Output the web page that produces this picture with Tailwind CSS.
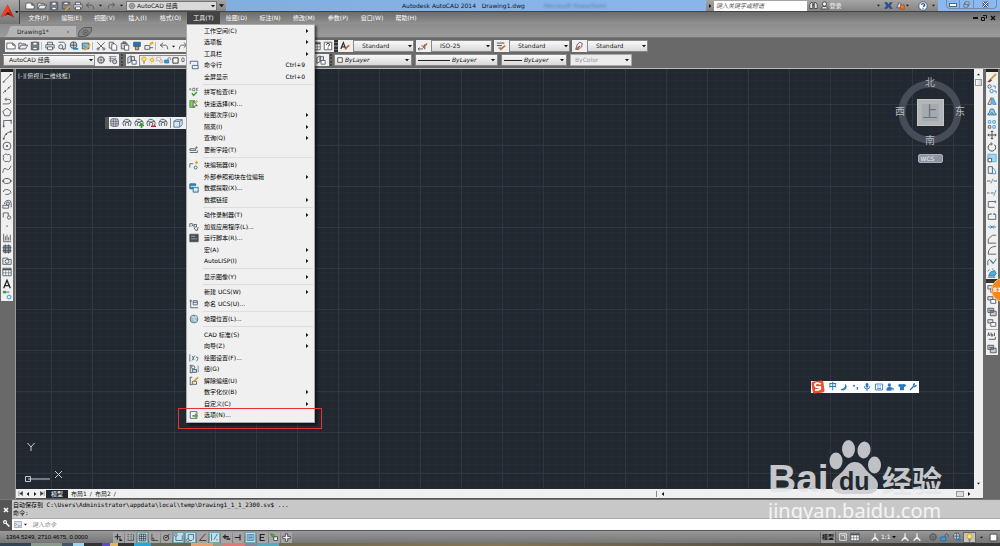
<!DOCTYPE html>
<html lang="zh-CN">
<head>
<meta charset="utf-8">
<title>Autodesk AutoCAD 2014 - Drawing1.dwg</title>
<script src="https://cdn.jsdelivr.net/npm/@tailwindcss/browser@4"></script>
</head>
<body class="h-screen overflow-hidden flex flex-col bg-[#696969] text-[6px] leading-[10px] text-[#222] font-['DejaVu_Sans','Noto_Sans_CJK_SC',sans-serif] [&_use]:fill-none [&_use]:stroke-[#4b525b] [&_use]:stroke-1">

<svg class="hidden" aria-hidden="true">
  <defs>
    <symbol id="new" viewBox="0 0 12 12"><path d="M1 2.500h7l3 2.500v4.500H1zM8 2.500V5h3" fill="#fff"/></symbol>
    <symbol id="open" viewBox="0 0 12 12"><path d="M1 9.500V2.500h3l1 1h4V5M1 9.500L3.500 5H11.500L9 9.500z" fill="#e8eaec"/></symbol>
    <symbol id="save" viewBox="0 0 12 12"><path d="M1.500 1.500h9v9h-9z" fill="#7d8792"/><path d="M3.500 1.500h5v3.500h-5zM3.500 7.500h5v3h-5z" fill="#fff"/></symbol>
    <symbol id="saveas" viewBox="0 0 12 12"><path d="M1.500 1.500h9v8h-9z" fill="#7d8792"/><path d="M3.500 1.500h5v3h-5z" fill="#fff"/><path d="M5 11L11 6" stroke="#e0a030" stroke-width="2"/></symbol>
    <symbol id="print" viewBox="0 0 12 12"><path d="M3 4.500V1.500h6v3M1 4.500h10v4H1z" fill="#e5e7ea"/><path d="M3 7h6v3.500H3z" fill="#fff"/></symbol>
    <symbol id="preview" viewBox="0 0 12 12"><path d="M2 1.500h6l2 2v6H6"/><circle cx="4.500" cy="7" r="2.500" fill="#dfe8ef"/><path d="M6.500 9l2 2"/></symbol>
    <symbol id="publish" viewBox="0 0 12 12"><circle cx="5.500" cy="5" r="4" fill="#b9cfdd"/><path d="M1.500 5h8M5.500 1v8"/><path d="M5 9.500h6" stroke="#1c82bf" stroke-width="2"/></symbol>
    <symbol id="globe3" viewBox="0 0 12 12"><path d="M1.500 2.500h8v7h-8z" fill="#7ec1dd"/><path d="M4 11L11 4" stroke="#e5aa2c" stroke-width="2"/><path d="M3 5l3 3" stroke="#2b6ea0"/></symbol>
    <symbol id="cut" viewBox="0 0 12 12"><path d="M1.500 1.500L9 9M10.500 1.500L3 9"/><circle cx="2.500" cy="9.500" r="1.300"/><circle cx="9.500" cy="9.500" r="1.300"/></symbol>
    <symbol id="copy" viewBox="0 0 12 12"><path d="M1.500 1.500h5v7h-5z"/><path d="M4.500 3.500h4l2 2v5.500h-6z" fill="#fff"/></symbol>
    <symbol id="paste" viewBox="0 0 12 12"><path d="M1.500 2.500h7v7h-7zM3.500 1h3v2h-3z" fill="#ccc"/><path d="M5.500 5h5v6h-5z" fill="#fff"/></symbol>
    <symbol id="match" viewBox="0 0 12 12"><path d="M2 1.500h8v5H2z" fill="#2e6fae" stroke="#285b88"/><path d="M4 6.500h4v4H4z" fill="#dba640"/></symbol>
    <symbol id="blocked" viewBox="0 0 12 12"><path d="M1 5.500h6V10H1zM7 8h4"/><path d="M7 4l4-2.500" stroke="#eea52c" stroke-width="2.500"/></symbol>
    <symbol id="undo" viewBox="0 0 12 12"><path d="M5 2L1.500 5 5 8M1.500 5H8q2.500.5 2.500 5" /></symbol>
    <symbol id="redo" viewBox="0 0 12 12"><path d="M7 2l3.500 3L7 8M10.500 5H4Q1.500 5.500 1.500 10"/></symbol>
    <symbol id="gear" viewBox="0 0 12 12"><circle cx="6" cy="6" r="4.300" stroke-dasharray="1.700 1"/><circle cx="6" cy="6" r="3.400"/><circle cx="6" cy="6" r="1.300"/></symbol>
    <symbol id="wsset" viewBox="0 0 12 12"><path d="M1 2h9M1 4.500h9M1 7h5M3 2v7" stroke="#6c737a"/><circle cx="8" cy="8" r="2.500" fill="#ccc"/></symbol>
    <symbol id="layers" viewBox="0 0 12 12"><path d="M1 3l4-2v7l-4 2zM5 2h4v5H5z" fill="#d7e5ee"/><path d="M6 6.500h5V11H6z" fill="#fff"/></symbol>
    <symbol id="bulb" viewBox="0 0 12 12"><circle cx="6" cy="4.500" r="3.300" fill="#fbe368" stroke="#c59a24"/><path d="M4.500 9h3M5 10.800h2"/></symbol>
    <symbol id="sun" viewBox="0 0 12 12"><circle cx="6" cy="6" r="2.500" fill="#fbe368" stroke="#c59a24"/><circle cx="6" cy="6" r="4.700" stroke="#d5a42d" stroke-dasharray="1.200 2.400"/></symbol>
    <symbol id="vpf" viewBox="0 0 12 12"><path d="M1 2h6v5H1z" stroke="#aaa"/><circle cx="8" cy="8" r="2.500" fill="#e8dfc0" stroke="#aaa"/></symbol>
    <symbol id="lock" viewBox="0 0 12 12"><path d="M1 6h6v4.500H1z" fill="#3aa0d8" stroke="#1a6ea0"/><path d="M6 6V3.500q2-3 4 0V6"/></symbol>
    <symbol id="swatch" viewBox="0 0 12 12"><path d="M1.500 1.500h9v9h-9z" fill="#fff" stroke="#222" stroke-width="1.500"/></symbol>
    <symbol id="help" viewBox="0 0 12 12"><path d="M1.500 1.500h9v9h-9z" fill="#fff"/><path d="M4 4.500q0-1.500 2-1.500t2 1.500Q8 5.500 6 6.500M6 8v1.300" stroke="#111"/></symbol>
    <symbol id="tstyle" viewBox="0 0 12 12"><path d="M1 9.500L4 2l3 7.500M2 7h4" stroke="#2a3038" stroke-width="1.400"/><path d="M6 10l5-5" stroke="#c46a2c" stroke-width="2"/></symbol>
    <symbol id="dstyle" viewBox="0 0 12 12"><path d="M0 9.500h6M2 8L0 9.500 2 11M4 6h3"/><path d="M6 8l5-5M8 10V4" stroke="#b5653a" stroke-width="1.700"/></symbol>
    <symbol id="tbstyle" viewBox="0 0 12 12"><path d="M1 2.500h9M1 5.500h6M3 8.500h3" stroke="#333"/><path d="M5 10.500l6-5" stroke="#b5763a" stroke-width="2"/></symbol>
    <symbol id="mlstyle" viewBox="0 0 12 12"><path d="M2 10l2-6 3-2.500 3 1.500-1 4-3 3z"/><path d="M3 10l4-4" stroke="#c05a2a" stroke-width="2"/></symbol>

    <symbol id="line" viewBox="0 0 12 12"><path d="M2 10.500L10.500 2"/><path d="M1 10.500h2M9.500 2h2" stroke-width="1.500"/></symbol>
    <symbol id="xline" viewBox="0 0 12 12"><path d="M1 11L11 2" stroke-dasharray="2.500 1"/><path d="M3 8.500h1.500M7.500 4.500H9" stroke-width="2"/></symbol>
    <symbol id="pline" viewBox="0 0 12 12"><path d="M1 9.500h6.500q3-.5 3-3t-3-2.500H4M5.500 2L3.500 4l2 2"/></symbol>
    <symbol id="polygon" viewBox="0 0 12 12"><path d="M6 1.500l5 3.700-2 5.300H3L1 5.200z"/></symbol>
    <symbol id="rect" viewBox="0 0 12 12"><path d="M2 10V3h9v4"/><path d="M1 10h2M10 3h1.500" stroke-width="2"/></symbol>
    <symbol id="arc" viewBox="0 0 12 12"><path d="M2 11Q3 3 11 2" /><path d="M1 10.500h2M4.500 5h1.500M9.500 2h2" stroke-width="2"/></symbol>
    <symbol id="circle" viewBox="0 0 12 12"><circle cx="6" cy="6" r="4.700"/><circle cx="6" cy="6" r=".8" fill="#2d6aa3"/></symbol>
    <symbol id="cloud" viewBox="0 0 12 12"><path d="M3 2q2-2 3.500 0Q9 .5 10 3q1.500 2 0 3.500 1.500 2-.5 3-1 2-3 .5-3 1.500-4-1Q.5 7.500 2 5.500 0 3 3 2z"/></symbol>
    <symbol id="spline" viewBox="0 0 12 12"><path d="M1 10.500Q2 3 5 6t6-4"/></symbol>
    <symbol id="ellipse" viewBox="0 0 12 12"><ellipse cx="6" cy="6" rx="4.800" ry="3"/><path d="M.5 6h2M9.500 6h2M6 2.500v1.200" stroke-width="2"/></symbol>
    <symbol id="ellarc" viewBox="0 0 12 12"><path d="M1.500 6Q2 2.500 6 3t5 3.500Q9.500 9.500 4 9"/></symbol>
    <symbol id="insert" viewBox="0 0 12 12"><path d="M1 7.500h7v3.500H1zM3 6q0-4 5-4.500 3 0 3 4V10"/><circle cx="7" cy="5.500" r="2" fill="#ccd"/></symbol>
    <symbol id="block" viewBox="0 0 12 12"><path d="M1.500 9V3.500h6V7"/><circle cx="8.500" cy="9" r="2"/></symbol>
    <symbol id="dot" viewBox="0 0 12 12"><path d="M5.300 6h1.500" stroke-width="1.500"/></symbol>
    <symbol id="hatch" viewBox="0 0 12 12"><path d="M2 1v9.500h9M4 9V4M6 9V2M8 9V5M10 9V2"/></symbol>
    <symbol id="grad" viewBox="0 0 12 12"><path d="M2 2h8v8H2z" fill="#9aa0a7"/><path d="M.5 4.500h11M.5 8h11M4 .5v11M8 .5v11"/></symbol>
    <symbol id="region" viewBox="0 0 12 12"><path d="M1 2.500h6v1.500h4v6H1z"/><circle cx="6" cy="6.500" r="2.300"/></symbol>
    <symbol id="table" viewBox="0 0 12 12"><path d="M1 1.500h10v9H1z" fill="#fff"/><path d="M1 3h10" stroke-width="2"/><path d="M1 7h10M4.500 4v6.500M8 4v6.500" stroke-width=".7"/></symbol>
    <symbol id="mtext" viewBox="0 0 12 12"><path d="M2 11L6 1.500 10 11M3.500 8h5" stroke="#222" stroke-width="1.600"/></symbol>
    <symbol id="addsel" viewBox="0 0 12 12"><path d="M1 2.500h4" stroke="#3aa535" stroke-width="3"/><path d="M5 2.500h4"/><circle cx="8.500" cy="8.500" r="2.300" fill="#d5ecfa" stroke="#2287c8"/></symbol>

    <symbol id="erase" viewBox="0 0 12 12"><path d="M4 8L11 1" stroke="#d99838" stroke-width="2.200"/><path d="M1 10.500l3-3 1.500 1.500-2 1.500z" fill="#b8332a" stroke="#333" stroke-width=".7"/></symbol>
    <symbol id="mcopy" viewBox="0 0 12 12"><circle cx="3" cy="3" r="2"/><circle cx="5.500" cy="8.500" r="2" stroke="#2287c8"/><path d="M7 2.500h3v3M8 8.500h3v2.500" stroke="#2287c8"/></symbol>
    <symbol id="mirror" viewBox="0 0 12 12"><path d="M1 10L5 2v8z"/><path d="M7 2l4 8H7z" fill="#7fc4ec" stroke="#2287c8"/></symbol>
    <symbol id="offset" viewBox="0 0 12 12"><path d="M1 9.500q0-2.500 2-3 0-4.500 3-4.500t3 4.500q2 .5 2 3z" fill="#9bd0ef" stroke="#24618f"/><path d="M4 8.500Q5 5 8 8.500"/></symbol>
    <symbol id="array" viewBox="0 0 12 12"><path d="M1.500 8h3v3h-3z"/><path d="M1.500 2h3v3h-3zM7 2h3v3H7zM7 8h3v3H7z" stroke="#2f9ad8"/></symbol>
    <symbol id="move" viewBox="0 0 12 12"><path d="M6 1v10M1 6h10" stroke="#333"/><path d="M4.500 2.500L6 1l1.500 1.500M4.500 9.500L6 11l1.500-1.500M2.500 4.500L1 6l1.500 1.500M9.500 4.500L11 6 9.500 7.500" stroke="#333"/></symbol>
    <symbol id="rotate" viewBox="0 0 12 12"><path d="M5 2a4.500 4.500 0 1 0 4 1.200M4.500.5L6.500 2.300 4.500 4" stroke="#333"/></symbol>
    <symbol id="scale" viewBox="0 0 12 12"><path d="M1 1.500h10v9H1z" fill="#9fd6f2" stroke="#57aeda"/><path d="M1.500 6.500h4v4h-4z" fill="#fff"/></symbol>
    <symbol id="stretch" viewBox="0 0 12 12"><path d="M1.500 2h5v8h-5z"/><path d="M6 3q4 1 4.500 7.500H5" stroke="#2f8fc8"/></symbol>
    <symbol id="trim" viewBox="0 0 12 12"><path d="M0 6h4M8 6h4"/><path d="M4.500 9L7.500 3" stroke="#2f8fc8"/></symbol>
    <symbol id="extend" viewBox="0 0 12 12"><path d="M0 6h3M4.500 6H8"/><path d="M8 9.500l3-7" stroke="#2f8fc8"/></symbol>
    <symbol id="breakp" viewBox="0 0 12 12"><path d="M1.500 10V3H10v2M1.500 10H9"/><path d="M9 3h2" stroke="#2f8fc8" stroke-width="2"/></symbol>
    <symbol id="break" viewBox="0 0 12 12"><path d="M1.500 10V4h2.500M8 4h2.500v6H1.500"/><path d="M3.500 3.500h2M7.500 3.500h2" stroke="#2f8fc8" stroke-width="1.800"/></symbol>
    <symbol id="join" viewBox="0 0 12 12"><path d="M1 6h10M4 4l2 2-2 2M8.500 4l-2 2 2 2" stroke="#2f78a8"/></symbol>
    <symbol id="chamfer" viewBox="0 0 12 12"><path d="M1.500 11V6L6.500 1.500H11M1.500 11H11"/></symbol>
    <symbol id="fillet" viewBox="0 0 12 12"><path d="M1.500 11Q1 2 11 1.500M1.500 11H11"/></symbol>
    <symbol id="blend" viewBox="0 0 12 12"><path d="M1 10V5q2-4 4 0t4 1l2-4"/><path d="M4 4l4 4" stroke="#2f8fc8" stroke-width="1.600"/></symbol>
    <symbol id="explode" viewBox="0 0 12 12"><path d="M2 9.500L4 5l5-2 2 3.500-2 3z" fill="#4fb0e0" stroke="#2479a8"/><path d="M1 4l2-2M7 2V.5M1 11h9"/></symbol>
    <symbol id="order" viewBox="0 0 12 12"><path d="M1 2h6v4H1z" fill="#d9dde2"/><path d="M4.500 5.500h6v4.500h-6z" fill="#fff"/></symbol>
    <symbol id="order2" viewBox="0 0 12 12"><path d="M1 1.500h7v5H1zM4 5h7v5.500H4z" fill="#c7cbd0"/><path d="M2.500 4h5" /></symbol>
    <symbol id="abc" viewBox="0 0 12 12"><path d="M1 6l1-4 1 4M5 2v4h2V4H5M9 6V2M2 10h8V7" stroke="#444"/></symbol>

    <symbol id="cmdrow" viewBox="0 0 12 12"><path d="M1.500 5V1.500h9V6M4 6.500h7v4H4z" stroke="#3c5a78"/></symbol>
    <symbol id="spell" viewBox="0 0 12 12"><path d="M.5 4l1-2.500 1 2.500M4.500 1.500v3H7v-3zM11 1.500H9V4h2" stroke-width=".8"/><path d="M3.500 7.500l2 2.500 4-4" stroke="#3a9e38" stroke-width="1.700"/></symbol>
    <symbol id="qsel" viewBox="0 0 12 12"><path d="M1 2h6v8H1z" fill="#8bcc70" stroke="#3d8f34"/><path d="M5 3l5 5H7l-2 2z" fill="#fff"/><path d="M9 1v4M7.500 3h3.500" stroke="#e6a52b"/></symbol>
    <symbol id="field" viewBox="0 0 12 12"><path d="M1 4.500h7v2H1zM1 9h9V6.500"/><path d="M9 1.500v3M7.500 3h3" stroke="#3a9e38"/></symbol>
    <symbol id="bedit" viewBox="0 0 12 12"><path d="M1 9V4.500h4"/><circle cx="8" cy="9" r="1.800"/><path d="M9 1v4M7 3h4" stroke="#e6a52b" stroke-width="1.500"/></symbol>
    <symbol id="dext" viewBox="0 0 12 12"><path d="M1 1h7v6H1z" fill="#3287bd" stroke="#235f8c"/><path d="M5 5h6v6H5z" fill="#bfe0f2" stroke="#235f8c"/><path d="M2 4h8M6 8h4" stroke="#fff"/></symbol>
    <symbol id="appload" viewBox="0 0 12 12"><path d="M1 6V2h3l1 2-2 1M6 3h3v3H6zM6 7l2 3h2l1-4"/></symbol>
    <symbol id="script" viewBox="0 0 12 12"><path d="M1 1.500h10v9H1z" fill="#4a4d52"/><path d="M2.500 4h5M2.500 7h7" stroke="#aaa"/></symbol>
    <symbol id="ucs" viewBox="0 0 12 12"><path d="M2 1v9.500h9M1 3l1-2 1 2M5 2h5v5H5zM5 4h5" stroke="#435a73"/></symbol>
    <symbol id="geo" viewBox="0 0 12 12"><circle cx="6" cy="6" r="4.700" fill="#9cc0c9" stroke="#55747c"/><path d="M3 3l3 1v3l3 2M8 2v2h2" stroke="#eef"/></symbol>
    <symbol id="dset" viewBox="0 0 12 12"><path d="M1 1.500v9M3.500 9L7 3M4 3.500l2 5M8 6q2-3 3 0L9 10" stroke="#476680"/></symbol>
    <symbol id="grp" viewBox="0 0 12 12"><path d="M1 1.500h3M1 10.500h3M1.500 1.500v9"/><circle cx="5" cy="4" r="2"/><path d="M4 6.500h5v3.500H4z" fill="#b9d9ec"/><path d="M11 2v8" stroke="#3690c8"/></symbol>
    <symbol id="ungrp" viewBox="0 0 12 12"><path d="M1 1.500h3M1 10.500h3M1.500 1.500v9M4 6.500h5V10H4z"/><path d="M5 7l6-5.500" stroke="#d19a2b" stroke-width="2"/></symbol>
    <symbol id="opt" viewBox="0 0 12 12"><path d="M1.500 2h8v8h-8z" fill="#fff"/><path d="M4 6h3V3.500L11 7l-4 3V8H4z" fill="#4cab3c" stroke="none"/></symbol>

    <symbol id="g1" viewBox="0 0 12 12"><rect x="1" y="1" width="9" height="9" rx="2" fill="#d3dbe8"/><path d="M1 4h9M1 7h9M4 1v9M7 1v9" stroke-width=".8"/></symbol>
    <symbol id="g2" viewBox="0 0 12 12"><path d="M2 9.500Q0 6 2 3.500T6 1.500t4 2 0 6M4 9.500V6q2-2 4 0v3.500M2 4q4 2 8 0" fill="#e5e8ee"/></symbol>
    <symbol id="plus" viewBox="0 0 12 12"><path d="M9 6v6M6 9h6" stroke="#2ba02b" stroke-width="1.800"/></symbol>
    <symbol id="minus" viewBox="0 0 12 12"><path d="M6 10h6" stroke="#d02626" stroke-width="1.800"/></symbol>
    <symbol id="cube" viewBox="0 0 12 12"><path d="M1 4l3-2h7v6l-3 3H1zM1 4h7v7M8 4l3-2" fill="#d5e6f5" stroke="#4c6e93"/></symbol>

    <symbol id="s1" viewBox="0 0 12 12"><path d="M1 5h8M4.500 1v8M7 8l4 2M8 7v4" stroke="#222" stroke-width="1.400"/></symbol>
    <symbol id="s2" viewBox="0 0 12 12"><path d="M2 2h2M6 2h2M2 5h2M6 5h2M2 8h2M6 8h2M10 2v8H2"/></symbol>
    <symbol id="s3" viewBox="0 0 12 12"><path d="M1.500 1.500h9v9h-9zM4.500 1.500v9M7.500 1.500v9M1.500 4.500h9M1.500 7.500h9" stroke="#333"/></symbol>
    <symbol id="s4" viewBox="0 0 12 12"><path d="M2.500 1v9H11M2.500 7H5v3" stroke="#333"/></symbol>
    <symbol id="s5" viewBox="0 0 12 12"><circle cx="5.500" cy="6.500" r="3.500" stroke="#222"/><path d="M5 7l5-6M4 6h3" stroke="#222"/></symbol>
    <symbol id="s6" viewBox="0 0 12 12"><path d="M2.500 2.500V10H11V3" stroke="#315a78"/><path d="M1 1h3v3H1z" fill="#fff"/></symbol>
    <symbol id="s7" viewBox="0 0 12 12"><path d="M3 2h7v6L8 10H3z" stroke="#315a78"/><path d="M1 8h3v3H1z" fill="#fff"/></symbol>
    <symbol id="s8" viewBox="0 0 12 12"><path d="M10 1L2 10h9" stroke="#222"/></symbol>
    <symbol id="s9" viewBox="0 0 12 12"><path d="M2 1v9.500M5 9l5-8" stroke="#26638c"/><path d="M8 9h2" stroke="#d9a020" stroke-width="2"/></symbol>
    <symbol id="s10" viewBox="0 0 12 12"><path d="M1 5h8M4 2v6M6 8h5" stroke="#222" stroke-width="1.700"/></symbol>
    <symbol id="s11" viewBox="0 0 12 12"><path d="M1 6h7M8 2v8" stroke="#222" stroke-width="1.500"/></symbol>
    <symbol id="s12" viewBox="0 0 12 12"><path d="M1.500 2h9v8h-9z" fill="#a8cfe6" stroke="#3a7da8"/><path d="M3 4h6M3 6h6M3 8h6" stroke="#3a7da8"/></symbol>
    <symbol id="s13" viewBox="0 0 12 12"><path d="M9 2H3v8h6M3 6h5" stroke="#222" stroke-width="1.600"/></symbol>
    <symbol id="s14" viewBox="0 0 12 12"><path d="M1 1l4 1 1 4-3-1z" fill="#5ab24a" stroke="#2f7d28"/><path d="M5 5h5v5H5z" fill="#eee" stroke="#333"/></symbol>
    <symbol id="s15" viewBox="0 0 12 12"><path d="M4.500 1h3v3.500H11v3H7.500V11h-3V7.500H1v-3h3.500z" fill="#eee" stroke="#333"/></symbol>
    <symbol id="binoc" viewBox="0 0 12 12"><path d="M1 10V5l2-3h2v8zM7 10V2h2l2 3v5zM5 5h2" fill="#e2e2e2" stroke="#333"/></symbol>
    <symbol id="user" viewBox="0 0 12 12"><circle cx="6" cy="4" r="2.800" fill="#f3f3f3" stroke="#333"/><path d="M1 10.500q1-3 3.500-3h3q2.500 0 3.500 3z" fill="#f3f3f3" stroke="#333"/></symbol>
    <symbol id="exch" viewBox="0 0 12 12"><path d="M1 2h3l2 3 2-3h3L8 6l3 4H8L6 7.500 4 10H1l2.500-4z" fill="#2d4f9c" stroke="#1e3572" stroke-width=".6"/></symbol>
    <symbol id="stay" viewBox="0 0 12 12"><path d="M1 9l3-7 3 3v4z" fill="#dde" stroke="#446"/><path d="M6 5h5v6H6z" fill="#e8772a" stroke="#a44c12"/></symbol>
    <symbol id="qhelp" viewBox="0 0 12 12"><circle cx="6" cy="6" r="5" fill="#fff" stroke="#33557f"/><path d="M4 4.500Q4.500 3 6 3t2 1.500-2 2M6 8v1.300" stroke="#1f4f9e" stroke-width="1.500"/></symbol>
    <symbol id="annot" viewBox="0 0 12 12"><path d="M6 1.500V6L2 10.500M6 6l4 4.500M4 8h4" stroke="#eee" stroke-width="1.500"/></symbol>
    <symbol id="model" viewBox="0 0 12 12"><path d="M2 2h8v8H2zM4 4h4v4" stroke="#eee"/></symbol>
    <symbol id="clean" viewBox="0 0 12 12"><path d="M1.500 1.500h9v9h-9z" fill="#fff" stroke="#333"/></symbol>
    <symbol id="arrow" viewBox="0 0 12 12"><path d="M0 3h12L6 10z" fill="#111" stroke="none"/></symbol>
    <symbol id="right" viewBox="0 0 12 12"><path d="M3 0v12l7-6z" fill="#111" stroke="none"/></symbol>
    <symbol id="moon" viewBox="0 0 12 12"><path d="M8 1Q13 7 6 11 2 12 1 9q7 0 7-8z" fill="#2a78bd" stroke="none"/></symbol>
    <symbol id="comma" viewBox="0 0 12 12"><circle cx="3" cy="4" r="1.500" fill="#2a78bd" stroke="none"/><path d="M8 6v4" stroke="#2a78bd" stroke-width="2"/></symbol>
    <symbol id="mic" viewBox="0 0 12 12"><rect x="4" y="0" width="4" height="7" rx="2" fill="#2a78bd" stroke="none"/><path d="M2 5q0 4 4 4t4-4M6 9v3" stroke="#2a78bd" stroke-width="1.500"/></symbol>
    <symbol id="kbd" viewBox="0 0 12 12"><path d="M.8 1.500h10.500v9H.8zM3 4h1M5.500 4h1M8 4h1M3 6h1M5.500 6h1M8 6h1M3 8.500h6" stroke="#2a78bd" stroke-width="1.300"/></symbol>
    <symbol id="person" viewBox="0 0 12 12"><circle cx="5" cy="3" r="2.500" fill="#2a78bd" stroke="none"/><path d="M1 11q0-5 4-5t3 2v3zM8 8h3v3" fill="#2a78bd" stroke="#2a78bd"/></symbol>
    <symbol id="shirt" viewBox="0 0 12 12"><path d="M0 3l3-2q3 2 6 0l3 2-1.500 3L9 5.500V11H3V5.500L1.500 6z" fill="#2a78bd" stroke="none"/></symbol>
    <symbol id="wrench" viewBox="0 0 12 12"><path d="M1.500 10.500L7 5M7 5q-1-3 2-4M7 5q3 1 4-2" stroke="#2a78bd" stroke-width="2"/></symbol>
  </defs>
</svg>

<header class="flex shrink-0 h-6 bg-[#777]">
  <button aria-label="应用程序菜单" class="w-5 shrink-0 flex items-center bg-linear-to-b from-[#aaa] to-[#777] border-r border-[#444]">
    <svg class="w-4 h-5" viewBox="0 0 16 20"><path d="M8 2L1 15l4-1 3-2 3 2 4 2z" fill="#c92017"/><path d="M8 2l2 7-5 5-4 1z" fill="#e8402c"/><path d="M5 14l3-4 4 4-4-1.500z" fill="#6d0b08"/></svg>
    <svg class="size-1"><use href="#arrow"/></svg>
  </button>
  <div class="flex-1 flex flex-col min-w-0">
    <div class="h-3 flex bg-linear-to-r from-[#7fa9d8] via-[#86b4e8] to-[#8cbaf0] border-b border-[#444]">
      <div class="flex items-center bg-linear-to-b from-[#a5a5a5] to-[#858585] pl-1 w-[206px]">
        <div data-strip="new:新建,open:打开,save:保存,saveas:另存为,print:打印,undo:放弃" class="flex"></div>
        <svg class="size-[3px] mx-[3px]"><use href="#arrow"/></svg>
        <button aria-label="重做" class="w-3 flex justify-center"><svg class="size-[9px]"><use href="#redo"/></svg></button>
        <svg class="size-[3px] mx-[3px]"><use href="#arrow"/></svg>
        <label class="flex-1 flex items-center h-[10px] bg-[#d9d9d9] border border-[#777] px-px" aria-label="工作空间">
          <svg class="size-2"><use href="#gear"/></svg>
          <select class="appearance-none flex-1 pl-px outline-none" aria-label="工作空间"><option>AutoCAD 经典</option></select>
          <svg class="size-1"><use href="#arrow"/></svg>
        </label>
        <svg class="size-[5px] mx-[2px]"><use href="#arrow"/></svg>
      </div>
      <h1 class="flex-1 pl-[176px] text-[#10151c] leading-[12px] whitespace-pre">Autodesk AutoCAD 2014   Drawing1.dwg<span class="text-[#5d80ab] blur-[1px]">          Microsoft PowerPoint</span></h1>
      <div class="flex items-center w-[232px] bg-linear-to-b from-[#a5a5a5] to-[#858585]">
        <svg class="size-1 mx-[2px]"><use href="#right"/></svg>
        <input aria-label="搜索" placeholder="键入关键字或短语" class="w-[93px] h-[10px] bg-white px-[2px] italic placeholder:text-[#555] outline-none">
        <button aria-label="搜索" class="w-[13px] flex justify-center"><svg class="size-[9px]"><use href="#binoc"/></svg></button>
        <button class="flex items-center text-[#eee] w-[58px] gap-px"><svg class="size-[9px]"><use href="#user"/></svg><span>登录</span></button>
        <svg class="size-[3px]"><use href="#arrow"/></svg>
        <button aria-label="Exchange" class="ml-[2px] w-3 flex justify-center"><svg class="size-[9px]"><use href="#exch"/></svg></button>
        <button aria-label="保持连接" class="w-3 flex justify-center"><svg class="size-[9px]"><use href="#stay"/></svg></button>
        <svg class="size-[3px] mr-2"><use href="#arrow"/></svg>
        <button aria-label="帮助" class="w-3 flex justify-center"><svg class="size-[10px]"><use href="#qhelp"/></svg></button>
        <svg class="size-[3px] mx-[3px]"><use href="#arrow"/></svg>
      </div>
      <div class="flex w-[62px] pl-2">
        <button aria-label="最小化" class="w-[14px] h-[9px] border border-t-0 border-[#6d8db5] rounded-bl flex items-end justify-center pb-[2px]"><i class="w-[6px] h-[2px] bg-white outline outline-[#567]"></i></button>
        <button aria-label="还原" class="w-[13px] h-[9px] border-b border-[#6d8db5] flex items-center justify-center"><svg class="size-[7px]" viewBox="0 0 7 7"><path d="M2 1h4v3H2zM1 3h4v3H1z" fill="#fff" stroke="#567"/></svg></button>
        <button aria-label="关闭" class="w-6 h-[9px] border border-t-0 border-[#6d8db5] rounded-br flex items-center justify-center"><svg class="size-[7px]" viewBox="0 0 7 7"><path d="M1 1l5 5M6 1L1 6" stroke="#456" stroke-width="2.500"/><path d="M1 1l5 5M6 1L1 6" stroke="#fff"/></svg></button>
      </div>
    </div>
    <div class="h-3 flex items-stretch bg-linear-to-b from-[#6b6b6b] to-[#929292]">
      <nav class="flex pl-[2px] text-white leading-[12px]" aria-label="菜单栏" id="menubar"></nav>
      <div class="ml-auto mr-1 flex items-center gap-[3px]">
        <button aria-label="最小化图形" class="w-[5px] h-[2px] bg-[#111]"></button>
        <button aria-label="还原图形"><svg class="size-[6px]" viewBox="0 0 6 6"><path d="M2 .5h3.500v3M.5 2.500h3v3h-3z" fill="none" stroke="#111"/></svg></button>
        <button aria-label="关闭图形"><svg class="size-[6px]" viewBox="0 0 6 6"><path d="M1 1l4 4M5 1L1 5" stroke="#111" stroke-width="1.500"/></svg></button>
      </div>
    </div>
  </div>
</header>

<div class="shrink-0 h-[14px] bg-linear-to-b from-[#8c8c8c] to-[#9b9b9b] flex items-end pl-1 border-b border-[#777]">
  <svg class="w-2 h-3" viewBox="0 0 8 12"><path d="M0 12Q4 11 5 4 6 1 8 1v11z" fill="#b4b4b4"/></svg>
  <button class="h-[11px] w-16 flex items-center justify-between bg-[#b4b4b4] pl-[5px] pr-[6px]"><span>Drawing1*</span><svg class="size-1" viewBox="0 0 6 6"><path d="M1 1l4 4M5 1L1 5" stroke="#777"/></svg></button>
  <button aria-label="新建选项卡" class="h-[10px] w-[14px] ml-[2px] rounded-tl-lg rounded-br-lg border border-[#5c5c5c] bg-[#858585] flex items-center justify-center"><svg class="size-[7px]" viewBox="0 0 12 12"><circle cx="6" cy="6" r="4.500" fill="none" stroke="#444"/><path d="M6 4v4M4 6h4" stroke="#444"/></svg></button>
</div>

<section class="shrink-0 h-[31px] pt-[2px] flex flex-col gap-[2px] border-b border-[#bbb]" aria-label="工具栏">
  <div class="flex h-3 pl-[5px]">
    <div class="w-[329px] flex items-center bg-[#f0f0f0] overflow-hidden">
      <div class="flex" data-strip="new:新建,open:打开,save:保存"></div><i class="w-[3px] h-2 border-l border-[#bbb]"></i>
      <div class="flex" data-strip="print:打印,preview:打印预览,publish:发布,globe3:三维打印"></div><i class="w-[3px] h-2 border-l border-[#bbb]"></i>
      <div class="flex" data-strip="cut:剪切,copy:复制,paste:粘贴,match:特性匹配,blocked:块编辑器"></div><i class="w-[3px] h-2 border-l border-[#bbb]"></i>
      <div class="flex" data-strip="undo:放弃"></div><svg class="size-[3px] mx-[2px]"><use href="#arrow"/></svg><div class="flex" data-strip="redo:重做"></div>
      <div class="ml-auto flex" data-strip="table:计算器,help:帮助"></div>
    </div>
    <i class="w-1 border-x-2 border-dotted border-[#333]"></i>
    <div class="flex gap-[2px]" id="styles"></div>
  </div>
  <div class="flex h-3 pl-[3px]">
    <div class="w-[116px] flex items-center bg-[#f0f0f0]">
      <label class="w-[93px] h-[11px] flex items-center bg-linear-to-b from-[#fafafa] to-[#ddd] border border-[#888] pl-[5px] pr-px"><select aria-label="工作空间" class="appearance-none flex-1 outline-none"><option>AutoCAD 经典</option></select><svg class="size-1"><use href="#arrow"/></svg></label>
      <div class="flex" data-strip="gear:工作空间设置,wsset:我的工作空间"></div>
    </div>
    <i class="w-[3px] mx-[2px] border-l-2 border-dotted border-[#444]"></i>
    <div class="w-[203px] flex items-center bg-[#f0f0f0]">
      <div class="flex" data-strip="layers:图层特性"></div>
      <label class="w-[176px] ml-px h-[11px] flex items-center bg-[#eee] border border-[#888]">
        <svg class="size-2"><use href="#bulb"/></svg><svg class="size-2"><use href="#sun"/></svg><svg class="size-2"><use href="#vpf"/></svg><svg class="size-2"><use href="#lock"/></svg><svg class="size-[7px]"><use href="#swatch"/></svg>
        <select aria-label="图层" class="appearance-none flex-1 pl-[2px] outline-none"><option>0</option></select>
      </label>
      <div class="flex" data-strip="layers:图层状态"></div>
    </div>
    <i class="w-[3px] mx-px border-l-2 border-dotted border-[#444]"></i>
    <div class="flex gap-[3px] italic text-[#111]" id="props"></div>
  </div>
</section>

<main class="flex-1 min-h-0 flex">
  <aside class="w-4 shrink-0 bg-[#696969] border-r border-[#999]" aria-label="绘图">
    <div class="w-3 ml-px h-[3px] bg-[#222]"></div>
    <div class="w-3 ml-px h-[229px] bg-[#f0f0f0] flex flex-col justify-around items-center" data-col="line:直线,xline:构造线,pline:多段线,polygon:多边形,rect:矩形,arc:圆弧,circle:圆,cloud:修订云线,spline:样条曲线,ellipse:椭圆,ellarc:椭圆弧,insert:插入块,block:创建块,dot:点,hatch:图案填充,grad:渐变色,region:面域,table:表格,mtext:多行文字,addsel:添加选定对象"></div>
  </aside>

  <div class="flex-1 min-w-0 flex flex-col">
    <div class="flex-1 min-h-0 flex">
      <div class="relative flex-1 bg-[#212830] bg-[linear-gradient(to_right,#2f3740_1px,transparent_1px),linear-gradient(to_bottom,#2f3740_1px,transparent_1px),linear-gradient(to_right,#242b34_1px,transparent_1px),linear-gradient(to_bottom,#242b34_1px,transparent_1px)] bg-size-[41px_41px,41px_41px,8px_8px,8px_8px] bg-position-[35px_35px]">
        <p class="pl-[2px] pt-[2px] text-[#ddd]">[-][俯视][二维线框]</p>

        <div class="absolute left-[89px] top-12 h-3 w-[100px] bg-[#f0f0f0] flex items-center border-l-4 border-[#555]" aria-label="平滑网格">
          <button aria-label="平滑对象" class="w-3 flex justify-center"><svg class="size-[10px]"><use href="#g1"/></svg></button>
          <button aria-label="提高平滑度" class="w-3 flex justify-center"><svg class="size-[10px]"><use href="#g2"/></svg></button>
          <button aria-label="优化网格" class="w-3 flex justify-center"><svg class="size-[10px]"><use href="#g2"/><use href="#plus"/></svg></button>
          <button aria-label="降低平滑度" class="w-3 flex justify-center"><svg class="size-[10px]"><use href="#g2"/><use href="#minus"/></svg></button>
          <button aria-label="锐化" class="w-3 flex justify-center"><svg class="size-[10px]"><use href="#g2"/></svg></button>
          <i class="w-px h-[10px] bg-[#888] mx-px"></i>
          <button aria-label="网格长方体" class="w-3 flex justify-center"><svg class="size-[10px]"><use href="#cube"/></svg></button>
        </div>

        <div class="absolute right-[9px] top-[8px] w-[70px] text-[#b5b9bd] text-[10px] leading-[12px]">
          <svg class="absolute left-[3px] top-[3px] size-16" viewBox="0 0 64 64"><circle cx="32" cy="32" r="28" fill="none" stroke="#464d58" stroke-width="7"/></svg>
          <div class="relative flex flex-col items-center">
            <span>北</span>
            <div class="w-full flex items-center justify-between h-[46px]"><span>西</span><button class="size-[27px] p-1 bg-[#b3b5b6] border border-[#c4c4c4] text-[#69737c] text-[15px] leading-[17px]"><span class="block bg-[#a3abb1]">上</span></button><span>东</span></div>
            <span>南</span>
            <button class="mt-[7px] w-[25px] h-[9px] rounded-[2px] bg-[#8f94a3] border border-[#a9adb8] text-[6px] leading-[7px] text-[#eee] text-left pl-[2px]">WCS</button>
          </div>
        </div>

        <svg class="absolute left-2 bottom-1 w-10 h-11" viewBox="0 0 40 44" fill="none" stroke="#ccc"><path d="M3.500 2l3.500 4 3.500-4M7 6v4M31 30l7 7M38 30l-7 7M1.500 35.500h5v5h-5zM4 38h22"/></svg>

        <div class="absolute right-[55px] top-[312px] h-3 w-[108px] flex items-center justify-between bg-white pr-[2px]" aria-label="输入法">
          <svg class="size-[14px] shrink-0" viewBox="0 0 14 14"><rect x="1" y="1" width="12" height="12" rx="2" fill="#e8502e" transform="rotate(-8 7 7)"/><path d="M10 4Q4 2 4 5t5 2q2 3-5 3" fill="none" stroke="#fff" stroke-width="1.800"/></svg>
          <b class="text-[8px] text-[#2a78bd]">中</b>
          <svg class="size-2"><use href="#moon"/></svg><svg class="size-2"><use href="#comma"/></svg><svg class="size-2"><use href="#mic"/></svg><svg class="size-2"><use href="#kbd"/></svg><svg class="size-2"><use href="#person"/></svg><svg class="size-2"><use href="#shirt"/></svg><svg class="size-2"><use href="#wrench"/></svg>
        </div>
      </div>
      <div class="w-[9px] shrink-0 bg-[#f0f0f0] flex flex-col items-center pt-1 pb-1" aria-label="垂直滚动条">
        <svg class="size-[3px] rotate-180"><use href="#arrow"/></svg>
        <i class="mt-[3px] w-[7px] h-[7px] bg-linear-to-r from-white to-[#ccc] border border-[#999]"></i>
        <svg class="size-[3px] mt-auto"><use href="#arrow"/></svg>
      </div>
    </div>
    <div class="h-[10px] shrink-0 flex items-center bg-[#f0f0f0] border-b border-[#555] leading-[8px] text-[#111]">
      <div class="flex w-[30px] justify-around items-center" aria-label="布局导航">
        <svg class="size-[5px]" viewBox="0 0 12 12"><path d="M2 0v12M11 1v10L4 6z" fill="#333" stroke="#333"/></svg>
        <svg class="size-1 rotate-180"><use href="#right"/></svg><svg class="size-1"><use href="#right"/></svg>
        <svg class="size-[5px]" viewBox="0 0 12 12"><path d="M10 0v12M1 1v10l7-5z" fill="#333" stroke="#333"/></svg>
      </div>
      <button class="h-[8px] px-[5px] bg-[#212830] text-white">模型</button>
      <button class="px-[3px]">布局1</button>/<button class="px-[3px]">布局2</button>/
      <div class="ml-auto w-[327px] flex items-center justify-between pl-1 pr-[12px] border-l border-[#888]" aria-label="水平滚动条">
        <svg class="size-1 rotate-180"><use href="#right"/></svg>
        <span class="flex items-center gap-[3px]"><i class="w-2 h-[6px] bg-[#ddd] border border-[#999]"></i><svg class="size-1"><use href="#right"/></svg></span>
      </div>
    </div>
  </div>

  <aside class="w-[17px] shrink-0 pl-[3px] relative" aria-label="修改">
    <div class="w-3 h-[3px] bg-[#222]"></div>
    <div class="w-3 h-[207px] bg-[#f0f0f0] flex flex-col justify-around items-center" data-col="erase:删除,mcopy:复制,mirror:镜像,offset:偏移,array:阵列,move:移动,rotate:旋转,scale:缩放,stretch:拉伸,trim:修剪,extend:延伸,breakp:打断于点,break:打断,join:合并,chamfer:倒角,fillet:圆角,blend:光顺曲线,explode:分解"></div>
    <div class="w-3 h-1 bg-[#333]"></div>
    <div class="w-3 h-[46px] bg-[#f0f0f0] flex flex-col justify-around items-center" data-col="order:前置,order:后置,order2:置于对象之上,order:置于对象之下"></div>
    <div class="w-3 h-[26px] bg-[#f0f0f0] border-t border-[#aaa] flex flex-col justify-around items-center" data-col="abc:注释前置,order2:图案填充后置"></div>
    <div class="absolute left-2 top-[209px] w-[9px] h-6 overflow-hidden"><b class="block size-6 rounded-full bg-[#f08a1d] border border-[#ffc27a] text-white leading-[22px] pl-px">81</b></div>
  </aside>
</main>

<section class="shrink-0 h-[31px] flex border-t border-[#777]" aria-label="命令行">
  <div class="w-3 bg-[#555] flex flex-col items-center justify-around pt-1">
    <button aria-label="关闭"><svg class="size-[6px]" viewBox="0 0 6 6"><path d="M1 1l4 4M5 1L1 5" stroke="#fff" stroke-width="1.500"/></svg></button>
    <button aria-label="自定义"><svg class="size-[7px]" viewBox="0 0 12 12"><path d="M5 5l6 6" stroke="#fff" stroke-width="2.500"/><circle cx="3.500" cy="3.500" r="2.500" fill="none" stroke="#fff" stroke-width="2"/></svg></button>
  </div>
  <div class="flex-1 flex flex-col">
    <div class="h-[19px] bg-[#c8c8c8] border-b border-[#aaa] pl-px pt-px leading-[8px] text-black font-['DejaVu_Sans_Mono','Noto_Sans_CJK_SC',monospace]">
      <p>自动保存到 C:\Users\Administrator\appdata\local\temp\Drawing1_1_1_2300.sv$ ...</p>
      <p>命令:</p>
    </div>
    <label class="flex-1 flex items-center bg-white pl-[2px] gap-[2px]">
      <svg class="w-2 h-[7px]" viewBox="0 0 12 10"><path d="M.5.5h11v9H.5z" fill="#dde3ea" stroke="#8a949e"/><path d="M2 3l2 2-2 2M6 7h4" fill="none" stroke="#666"/></svg>
      <svg class="size-[3px]"><use href="#arrow"/></svg>
      <input aria-label="命令" placeholder="键入命令" class="flex-1 pl-[3px] outline-none italic placeholder:text-[#888]">
    </label>
  </div>
</section>

<footer class="shrink-0 h-[13px] flex items-center bg-linear-to-b from-[#9a9a9a] to-[#757575] border-t border-[#555]">
  <output class="w-[113px] pl-[6px] text-black font-['Liberation_Sans',sans-serif]">1364.5249, 2710.4675, 0.0000</output>
  <div class="flex h-[11px]" id="status"></div>
  <div class="ml-auto flex items-center h-[11px] pr-px text-[#111]">
    <button class="h-full px-px mr-px bg-[#999] border-x border-[#666] leading-[10px] font-bold">模型</button>
    <div class="flex pr-1" data-strip="model:快速查看布局,table:快速查看图形"></div>
    <div class="flex pl-1" data-strip="annot:注释比例"></div>
    <label class="flex items-center gap-px"><select aria-label="注释比例" class="appearance-none outline-none text-white"><option>1:1</option></select><svg class="size-1"><use href="#arrow"/></svg></label>
    <div class="flex pl-[3px] pr-1" data-strip="annot:注释可见性,annot:自动缩放"></div>
    <div class="flex" data-strip="gear:切换工作空间,lock:锁定,publish:硬件加速"></div>
    <button aria-label="隔离对象" class="w-[13px] h-full flex items-center justify-center bg-[#c5c5b8] border border-[#666]"><svg class="size-[9px]"><use href="#bulb"/></svg></button>
    <svg class="size-[3px] mx-1"><use href="#arrow"/></svg>
    <button aria-label="全屏显示" class="w-3 flex justify-center"><svg class="size-[9px]"><use href="#clean"/></svg></button>
  </div>
</footer>
<div class="shrink-0 h-[3px] flex bg-linear-to-r from-[#5d5d4a] via-[#857455] to-[#333]">
  <i class="w-[31px] bg-[#345]"></i><i class="w-[31px] bg-[#8a9a8a]"></i><i class="w-[11px] bg-[#456]"></i><i class="w-[11px] bg-[#9ad4ef]"></i><i class="w-[18px] bg-[#333]"></i><i class="w-2 bg-[#6048c0]"></i><i class="w-2 bg-[#e0b860]"></i><i class="w-4 bg-[#333]"></i><i class="w-[17px] bg-[#2aa5da]"></i><i class="w-10 bg-[#665]"></i><i class="w-[22px] bg-[#e8a070]"></i><i class="w-[10px] bg-[#998]"></i><i class="w-[22px] bg-[#e07878]"></i><i class="w-[12px] bg-[#889]"></i><i class="w-[22px] bg-[#5ab]"></i>
</div>

<div class="absolute left-[186px] top-6 w-[129px] h-[399px] bg-[#f0f0f0] border border-[#aaa] shadow-[2px_2px_2px_#0008] pb-px flex flex-col text-black" role="menu" aria-label="工具" id="tools"></div>
<div class="absolute left-[178px] top-[408px] w-[144px] h-[21px] border border-[#e03434] pointer-events-none"></div>

<div class="absolute right-[54px] top-[438px] w-[178px] h-[86px] text-[#e4e5e8]/85 pointer-events-none">
  <svg class="absolute left-[60px] top-0 w-[54px] h-14" viewBox="0 0 54 56" fill="#cdced2" fill-opacity=".92"><ellipse cx="8" cy="23" rx="6.500" ry="8.500"/><ellipse cx="20.500" cy="11" rx="6.500" ry="9"/><ellipse cx="36" cy="12" rx="6.500" ry="8.500" transform="rotate(10 36 12)"/><ellipse cx="46.500" cy="27" rx="6.500" ry="8.500"/><path d="M27 24c7 0 9 6 13 10s10 7 10 13-5 9-11 9H15c-6 0-11-3-11-9s6-9 10-13 6-10 13-10z"/></svg>
  <div class="relative flex items-end h-[60px] leading-[38px] font-bold">
    <span class="w-[71px] text-[39px] font-['Liberation_Sans',sans-serif]">Bai</span>
    <span class="w-[43px] text-[25px] leading-[34px] text-[#212830] font-['Liberation_Sans',sans-serif]">du</span>
    <span class="text-[30px] font-['Noto_Sans_CJK_SC',sans-serif]">经验</span>
  </div>
  <p class="relative text-[20px] leading-[26px] text-white/80 font-['Noto_Sans',sans-serif]">jingyan.baidu.com</p>
</div>

<script>
const icon = (id, cls) => `<svg class="${cls}"><use href="#${id}"/></svg>`;
const pairs = s => s.split(',').map(p => p.split(':'));

document.querySelectorAll('[data-strip]').forEach(el => {
  el.innerHTML = pairs(el.dataset.strip).map(([id, name]) =>
    `<button aria-label="${name}" class="w-3 flex justify-center">${icon(id, 'size-[10px]')}</button>`).join('');
});
document.querySelectorAll('[data-col]').forEach(el => {
  el.innerHTML = pairs(el.dataset.col).map(([id, name]) =>
    `<button aria-label="${name}">${icon(id, 'size-[10px]')}</button>`).join('');
});

document.getElementById('menubar').innerHTML =
  ['文件(F)','编辑(E)','视图(V)','插入(I)','格式(O)','工具(T)','绘图(D)','标注(N)','修改(M)','参数(P)','窗口(W)','帮助(H)'].map((t, i) =>
    i === 5 ? `<button class="w-[33px] bg-[#444]" aria-expanded="true">${t}</button>`
    : i < 7 ? `<button class="w-[33px]">${t}</button>`
            : `<button class="w-[34px]">${t}</button>`).join('');

document.getElementById('styles').innerHTML =
  [['tstyle','Standard','文字样式'],['dstyle','ISO-25','标注样式'],['tbstyle','Standard','表格样式'],['mlstyle','Standard','多重引线样式']].map(([id, t, n]) =>
    `<div class="flex items-center w-[76px] bg-[#f0f0f0] pl-[2px]">${icon(id, 'size-[10px] mr-[3px]')}<label class="flex-1 h-3 flex items-center bg-linear-to-b from-[#fafafa] to-[#d8d8d8] border border-[#888] pl-2 pr-px"><select aria-label="${n}" class="appearance-none flex-1 min-w-0 outline-none"><option>${t}</option></select>${icon('arrow', 'size-1')}</label></div>`).join('');

const prop = (cls, pre, t, n) =>
  `<label class="${cls}">${pre}<select aria-label="${n}" class="appearance-none flex-1 min-w-0 outline-none"><option>${t}</option></select>${icon('arrow', 'size-1')}</label>`;
document.getElementById('props').innerHTML =
  prop('w-[78px] flex items-center gap-[2px] bg-linear-to-b from-[#fafafa] to-[#d8d8d8] border border-[#888] px-[2px]', icon('swatch', 'size-[6px]'), 'ByLayer', '颜色') +
  prop('w-[83px] flex items-center gap-[2px] bg-linear-to-b from-[#fafafa] to-[#d8d8d8] border border-[#888] px-[2px]', '<i class="w-8 h-px bg-[#222]"></i>', 'ByLayer', '线型') +
  prop('w-[66px] flex items-center gap-[2px] bg-linear-to-b from-[#fafafa] to-[#d8d8d8] border border-[#888] px-[2px]', '<i class="w-[18px] h-px bg-[#222]"></i>', 'ByLayer', '线宽') +
  prop('w-[62px] flex items-center bg-[#ececec] border border-[#aaa] pl-1 pr-[2px] text-[#999] not-italic', '', 'ByColor', '打印样式');

document.getElementById('status').innerHTML =
  ['推断约束','捕捉','栅格','正交','极轴追踪','对象捕捉','三维对象捕捉','对象捕捉追踪','动态UCS','动态输入','线宽','透明度','快捷特性','选择循环','注释监视器'].map((n, i) =>
    [2,5,6,8,11].includes(i)
      ? `<button aria-label="${n}" aria-pressed="true" class="w-[11px] mr-px flex items-center justify-center bg-[#bfe0f0] border border-[#7aa]">${icon('s' + (i + 1), 'size-[9px]')}</button>`
      : `<button aria-label="${n}" class="w-[11px] mr-px flex items-center justify-center bg-[#a5a5a5]">${icon('s' + (i + 1), 'size-[9px]')}</button>`).join('');

/* Tools menu: [label, icon, submenu marker or shortcut]; null is a separator */
const tools = [
  ['工作空间(C)','','>'],['选项板','','>'],['工具栏','','>'],['命令行','cmdrow','Ctrl+9'],['全屏显示','','Ctrl+0'],null,
  ['拼写检查(E)','spell'],['快速选择(K)...','qsel'],['绘图次序(D)','','>'],['隔离(I)','','>'],['查询(Q)','','>'],['更新字段(T)','field'],null,
  ['块编辑器(B)','bedit'],['外部参照和块在位编辑','','>'],['数据提取(X)...','dext'],['数据链接','','>'],null,
  ['动作录制器(T)','','>'],['加载应用程序(L)...','appload'],['运行脚本(R)...','script'],['宏(A)','','>'],['AutoLISP(I)','','>'],null,
  ['显示图像(Y)','','>'],null,
  ['新建 UCS(W)','','>'],['命名 UCS(U)...','ucs'],null,
  ['地理位置(L)...','geo'],null,
  ['CAD 标准(S)','','>'],['向导(Z)','','>'],['绘图设置(F)...','dset'],['组(G)','grp'],['解除编组(U)','ungrp'],['数字化仪(B)','','>'],['自定义(C)','','>'],['选项(N)...','opt']
];
document.getElementById('tools').innerHTML = tools.map(r => !r
  ? '<hr class="h-1 ml-4 mr-px shrink-0 border-0 bg-[linear-gradient(transparent_1px,#ddd_1px,#ddd_2px,transparent_2px)]">'
  : `<button role="menuitem" class="flex-1 min-h-0 flex items-center text-left pr-[5px]"><span class="w-[17px] flex pl-[2px]">${r[1] ? icon(r[1], 'size-[10px]') : ''}</span><span class="flex-1">${r[0]}</span>${r[2] === '>' ? icon('right', 'size-1') : r[2] ? `<span class="pr-1">${r[2]}</span>` : ''}</button>`).join('');
</script>
</body>
</html>
